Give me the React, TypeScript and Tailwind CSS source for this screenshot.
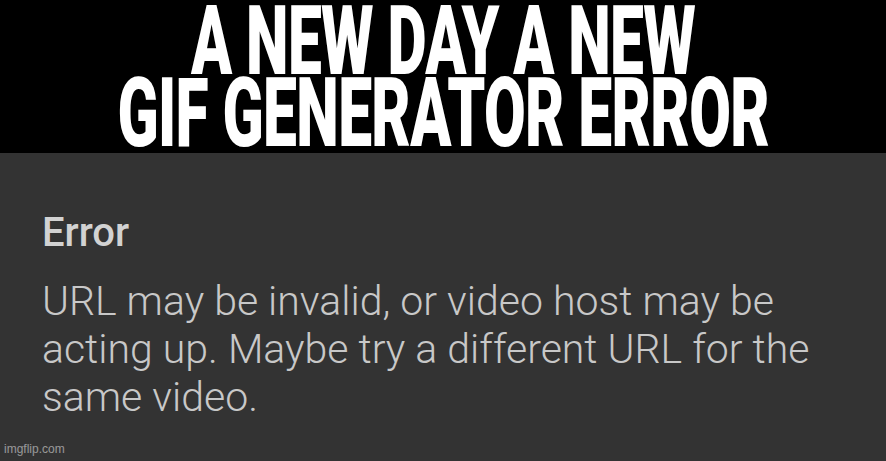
export default function App() {
  return (
    <div className="w-[886px] h-[461px] flex flex-col overflow-hidden font-['Roboto',sans-serif]">
      {/* Caption band */}
      <div className="h-[153px] shrink-0 bg-black flex flex-col items-center pt-[5px] text-white font-black text-[96px] leading-[72px] tracking-[-1px]">
        <span className="inline-block scale-x-[0.63] whitespace-nowrap">A NEW DAY A NEW</span>
        <span className="inline-block scale-x-[0.63] whitespace-nowrap">GIF GENERATOR ERROR</span>
      </div>

      {/* Error panel */}
      <div className="relative flex-1 bg-[#333333] pl-[42px] pt-[56px]">
        <h2 className="text-[40px] leading-[48px] font-medium text-[#d2d2d2]">Error</h2>
        <p className="mt-[20px] text-[41px] leading-[48px] font-light text-[#c8c8c8] whitespace-nowrap">
          URL may be invalid, or video host may be
          <br />
          acting up. Maybe try a different URL for the
          <br />
          same video.
        </p>
        <span className="absolute left-[4px] bottom-[3px] text-[12px] font-['Liberation_Sans',sans-serif] text-white/50">
          imgflip.com
        </span>
      </div>
    </div>
  );
}
